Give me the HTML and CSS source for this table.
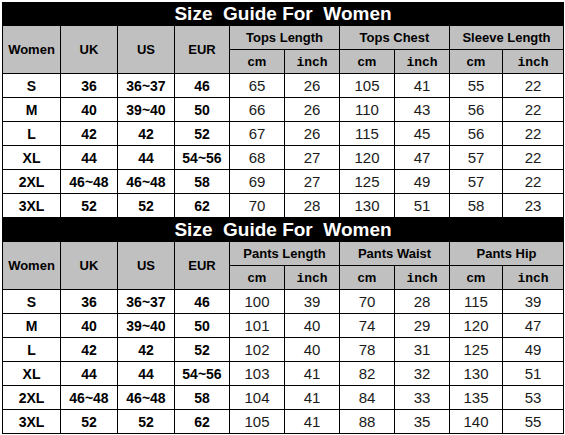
FILE: index.html
```html
<!DOCTYPE html>
<html>
<head>
<meta charset="utf-8">
<link rel="stylesheet" href="styles.css">
</head>
<body>
<div class="sheet">
  <div class="grid grid-top">
    <div class="title t1">Size  Guide For  Women</div>
    <div class="hd span2r">Women</div>
    <div class="hd span2r">UK</div>
    <div class="hd span2r">US</div>
    <div class="hd span2r">EUR</div>
    <div class="hd span2c">Tops Length</div>
    <div class="hd span2c">Tops Chest</div>
    <div class="hd span2c">Sleeve Length</div>
    <div class="hd">cm</div><div class="hd mono">inch</div>
    <div class="hd">cm</div><div class="hd mono">inch</div>
    <div class="hd">cm</div><div class="hd mono">inch</div>

    <div class="b">S</div><div class="b">36</div><div class="b">36~37</div><div class="b">46</div><div class="n">65</div><div class="n">26</div><div class="n">105</div><div class="n">41</div><div class="n">55</div><div class="n">22</div>
    <div class="b">M</div><div class="b">40</div><div class="b">39~40</div><div class="b">50</div><div class="n">66</div><div class="n">26</div><div class="n">110</div><div class="n">43</div><div class="n">56</div><div class="n">22</div>
    <div class="b">L</div><div class="b">42</div><div class="b">42</div><div class="b">52</div><div class="n">67</div><div class="n">26</div><div class="n">115</div><div class="n">45</div><div class="n">56</div><div class="n">22</div>
    <div class="b">XL</div><div class="b">44</div><div class="b">44</div><div class="b">54~56</div><div class="n">68</div><div class="n">27</div><div class="n">120</div><div class="n">47</div><div class="n">57</div><div class="n">22</div>
    <div class="b">2XL</div><div class="b">46~48</div><div class="b">46~48</div><div class="b">58</div><div class="n">69</div><div class="n">27</div><div class="n">125</div><div class="n">49</div><div class="n">57</div><div class="n">22</div>
    <div class="b">3XL</div><div class="b">52</div><div class="b">52</div><div class="b">62</div><div class="n">70</div><div class="n">28</div><div class="n">130</div><div class="n">51</div><div class="n">58</div><div class="n">23</div>
  </div>

  <div class="grid grid-bottom">
    <div class="title t2">Size  Guide For  Women</div>
    <div class="hd span2r">Women</div>
    <div class="hd span2r">UK</div>
    <div class="hd span2r">US</div>
    <div class="hd span2r">EUR</div>
    <div class="hd span2c">Pants Length</div>
    <div class="hd span2c">Pants Waist</div>
    <div class="hd span2c">Pants Hip</div>
    <div class="hd">cm</div><div class="hd mono">inch</div>
    <div class="hd">cm</div><div class="hd mono">inch</div>
    <div class="hd">cm</div><div class="hd mono">inch</div>

    <div class="b">S</div><div class="b">36</div><div class="b">36~37</div><div class="b">46</div><div class="n">100</div><div class="n">39</div><div class="n">70</div><div class="n">28</div><div class="n">115</div><div class="n">39</div>
    <div class="b">M</div><div class="b">40</div><div class="b">39~40</div><div class="b">50</div><div class="n">101</div><div class="n">40</div><div class="n">74</div><div class="n">29</div><div class="n">120</div><div class="n">47</div>
    <div class="b">L</div><div class="b">42</div><div class="b">42</div><div class="b">52</div><div class="n">102</div><div class="n">40</div><div class="n">78</div><div class="n">31</div><div class="n">125</div><div class="n">49</div>
    <div class="b">XL</div><div class="b">44</div><div class="b">44</div><div class="b">54~56</div><div class="n">103</div><div class="n">41</div><div class="n">82</div><div class="n">32</div><div class="n">130</div><div class="n">51</div>
    <div class="b">2XL</div><div class="b">46~48</div><div class="b">46~48</div><div class="b">58</div><div class="n">104</div><div class="n">41</div><div class="n">84</div><div class="n">33</div><div class="n">135</div><div class="n">53</div>
    <div class="b">3XL</div><div class="b">52</div><div class="b">52</div><div class="b">62</div><div class="n">105</div><div class="n">41</div><div class="n">88</div><div class="n">35</div><div class="n">140</div><div class="n">55</div>
  </div>
</div>
</body>
</html>
```

FILE: styles.css
```css
html, body {
  margin: 0;
  padding: 0;
  background: #ffffff;
}

.sheet {
  padding: 2px 0 0 2px;
  width: 562px;
}

.grid {
  display: grid;
  grid-template-columns: 57px 56px 56px 54px 54px 54px 54px 54px 52px 60px;
  gap: 1px;
  background: #000000;
  padding: 1px;
  font-family: "Liberation Sans", Arial, sans-serif;
  color: #000000;
}

.grid-top {
  grid-template-rows: 22px 23px 23px repeat(6, 23px);
}

.grid-bottom {
  padding-top: 0;
  grid-template-rows: 23px 23px 23px repeat(6, 23px);
}

.grid > div {
  display: flex;
  align-items: center;
  justify-content: center;
  background: #ffffff;
  white-space: nowrap;
}

.grid > .title {
  grid-column: 1 / span 10;
  background: #000000;
  color: #ffffff;
  font-weight: bold;
  font-size: 19px;
  white-space: pre;
}

.grid > .hd {
  background: #c0c0c0;
  font-weight: bold;
  font-size: 13px;
}

.grid > .mono {
  font-family: "Liberation Mono", "Courier New", monospace;
  font-size: 13px;
  padding-top: 2px;
}

.span2r {
  grid-row: span 2;
}

.span2c {
  grid-column: span 2;
}

.grid > .b {
  font-weight: bold;
  font-size: 14px;
}

.grid > .n {
  font-size: 15px;
  color: #1a1a1a;
}
```
